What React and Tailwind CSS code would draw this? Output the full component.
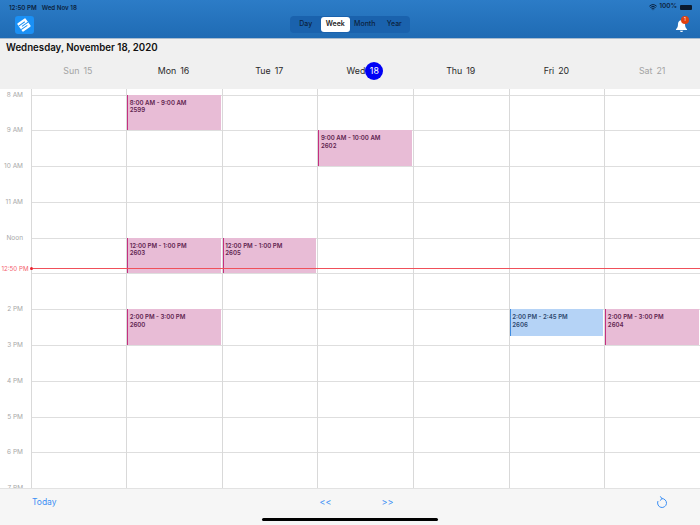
import { Wifi } from 'lucide-react';

const days = [
  { name: 'Sun', num: 15, muted: true },
  { name: 'Mon', num: 16 },
  { name: 'Tue', num: 17 },
  { name: 'Wed', num: 18, today: true },
  { name: 'Thu', num: 19 },
  { name: 'Fri', num: 20 },
  { name: 'Sat', num: 21, muted: true },
];

const hours = ['8 AM', '9 AM', '10 AM', '11 AM', 'Noon', '', '2 PM', '3 PM', '4 PM', '5 PM', '6 PM', '7 PM'];

const HOUR_HEIGHT = 35.8;
const GRID_TOP = 5.5;

const events = [
  { day: 1, start: 0, length: 1, time: '8:00 AM - 9:00 AM', id: '2599' },
  { day: 3, start: 1, length: 1, time: '9:00 AM - 10:00 AM', id: '2602' },
  { day: 1, start: 4, length: 1, time: '12:00 PM - 1:00 PM', id: '2603' },
  { day: 2, start: 4, length: 1, time: '12:00 PM - 1:00 PM', id: '2605' },
  { day: 1, start: 6, length: 1, time: '2:00 PM - 3:00 PM', id: '2600' },
  { day: 5, start: 6, length: 0.75, time: '2:00 PM - 2:45 PM', id: '2606', blue: true },
  { day: 6, start: 6, length: 1, time: '2:00 PM - 3:00 PM', id: '2604' },
];

function Logo() {
  return (
    <div className="flex h-[18.500px] w-[18.500px] items-center justify-center rounded-[3px] bg-[#1a90f5]">
      <svg width="16" height="16" viewBox="0 0 16 16">
        <g transform="rotate(-35 8 8)">
          <rect x="3" y="3" width="10" height="10" rx="0.8" fill="white" />
          <path d="M3 5.800 H10.500 M5.500 8 H13 M3 10.200 H10.500" stroke="#1a90f5" strokeWidth="1" fill="none" />
        </g>
      </svg>
    </div>
  );
}

function Segments() {
  const items = ['Day', 'Week', 'Month', 'Year'];
  return (
    <div className="flex h-[17px] w-[120px] items-center rounded-[4px] bg-[#1a62ad] p-[1px]">
      {items.map((item) => (
        <div
          key={item}
          className={
            item === 'Week'
              ? 'flex h-[15px] flex-1 items-center justify-center rounded-[3px] bg-white text-[7px] font-semibold text-[#1c1c1e]'
              : 'flex h-[15px] flex-1 items-center justify-center text-[7px] font-medium text-[#0b2340]'
          }
        >
          {item}
        </div>
      ))}
    </div>
  );
}

function Header() {
  return (
    <header className="h-[39px] shrink-0 border-b border-b-[#a9bccf] bg-gradient-to-b from-[#2c7cc7] to-[#1f6bb4]">
      <div className="flex h-[13.500px] items-center justify-between pl-[9px] pr-[8px] pt-[1px] text-[6.2px] font-semibold text-[#0b2340]">
        <div className="flex gap-[5px]">
          <span>12:50 PM</span>
          <span>Wed Nov 18</span>
        </div>
        <div className="flex items-center gap-[2px]">
          <Wifi size={8} strokeWidth={3} className="text-[#0b2340]" />
          <span className="text-[6.5px]">100%</span>
          <div className="ml-[1px] h-[5px] w-[12px] rounded-[1px] bg-[#0b1a2e]" />
        </div>
      </div>
      <div className="grid h-[24.500px] grid-cols-[1fr_120px_1fr] items-center px-[15px]">
        <div className="-mt-[2px]">
          <Logo />
        </div>
        <div className="-mt-[3px]">
          <Segments />
        </div>
        <div className="flex justify-end">
          <div className="relative -mr-[3px] mt-[1px]">
            <svg className="block" width="13" height="14" viewBox="0 0 14 15" fill="white">
              <path d="M7 1.2c-2.6 0-3.8 2-3.8 4.4 0 2.9-.8 4-2.1 5.3-.3.4-.1.8.4.8h11c.5 0 .7-.4.4-.8-1.3-1.3-2.1-2.4-2.1-5.3C10.800 3.200 9.600 1.200 7 1.200z" />
              <path d="M5.200 12.600a1.900 1.900 0 0 0 3.600 0z" />
            </svg>
            <div className="absolute -right-[1px] -top-[3px] flex h-[8px] w-[8px] items-center justify-center rounded-full bg-[#e0400f] text-[4.5px] text-white">
              1
            </div>
          </div>
        </div>
      </div>
    </header>
  );
}

function DayHeader() {
  return (
    <div className="h-[50px] shrink-0 bg-[#f0f0f0]">
      <div className="pl-[6px] pt-[2px] text-[9.7px] font-semibold leading-[14px] text-[#111]">
        Wednesday, November 18, 2020
      </div>
      <div className="mt-[6px] grid grid-cols-[30px_repeat(7,1fr)]">
        <div />
        {days.map((d) => (
          <div
            key={d.name}
            className={
              d.muted
                ? 'flex h-[20px] items-center justify-center gap-[4px] text-[8.8px] text-[#a3a3a3]'
                : 'flex h-[20px] items-center justify-center gap-[4px] text-[8.8px] text-[#2a2a2a]'
            }
          >
            {d.today ? (
              <div className="flex items-center">
                <span>{d.name}</span>
                <span className="flex h-[18px] w-[18px] items-center justify-center rounded-full bg-[#0000f5] text-white">
                  {d.num}
                </span>
              </div>
            ) : (
              <>
                <span>{d.name}</span>
                <span>{d.num}</span>
              </>
            )}
          </div>
        ))}
      </div>
    </div>
  );
}

function EventCard({ event }) {
  const color = event.blue
    ? 'border-l-[#3f8be0] bg-[#b5d3f6] text-[#2f4a70]'
    : 'border-l-[#c4307f] bg-[#e8bcd6] text-[#5f2450]';
  return (
    <div
      className={`absolute left-0 right-[1px] overflow-hidden border-l pl-[1.500px] pt-[4px] text-[6.1px] font-semibold leading-[7.700px] ${color}`}
      style={{
        top: GRID_TOP + event.start * HOUR_HEIGHT,
        height: event.length * HOUR_HEIGHT,
      }}
    >
      <div>{event.time}</div>
      <div>{event.id}</div>
    </div>
  );
}

function WeekGrid() {
  return (
    <div className="relative grid min-h-0 flex-1 grid-cols-[30.5px_repeat(7,1fr)] overflow-hidden bg-white">
      <div className="pt-[5.500px]">
        {hours.map((h, i) => (
          <div key={i} className="h-[35.8px] pr-[7.500px] text-right">
            <span className="block -translate-y-[4px] text-[6.5px] leading-[9px] text-[#a8a8a8]">{h}</span>
          </div>
        ))}
      </div>
      {days.map((d, dayIndex) => (
        <div key={d.name} className="relative border-l border-l-[#d9d9d9] pt-[5.500px]">
          {hours.map((h, i) => (
            <div key={i} className="h-[35.8px] border-t border-t-[#dedede]" />
          ))}
          {events
            .filter((e) => e.day === dayIndex)
            .map((e) => (
              <EventCard key={e.id} event={e} />
            ))}
        </div>
      ))}
      <div className="absolute left-[1.500px] right-0 top-[175px] flex items-center">
        <span className="w-[28px] whitespace-nowrap text-[6.2px] leading-[9px] text-[#f4606e]">12:50 PM</span>
        <span className="h-[3px] w-[3px] rounded-full bg-[#e8202c]" />
        <div className="h-px flex-1 bg-[#f0505a]" />
      </div>
    </div>
  );
}

function Footer() {
  return (
    <footer className="relative grid h-[37px] shrink-0 grid-cols-[287.500px_74px_1fr] border-t border-t-[#e2e2e2] bg-[#f6f6f6] pb-[10px] pl-[32px] pr-[32px] text-[#3b8ff5]">
      <div className="flex items-center text-[8.5px]">Today</div>
      <div className="flex items-center justify-between text-[9px]">
        <span>&lt;&lt;</span>
        <span>&gt;&gt;</span>
      </div>
      <div className="flex items-center justify-end">
        <svg width="12" height="13" viewBox="0 0 12 13" fill="none" stroke="currentColor" strokeWidth="1" strokeLinecap="round" strokeLinejoin="round">
          <path d="M6 2.500a4.500 4.500 0 1 1-4.200 2.900" />
          <path d="M4.200 0.600 L6.200 2.500 L4.200 4.400" />
        </svg>
      </div>
      <div className="absolute bottom-[4px] left-[262px] h-[3px] w-[176px] rounded-full bg-black" />
    </footer>
  );
}

export default function App() {
  return (
    <div className="flex h-[525px] w-[700px] flex-col overflow-hidden bg-white font-['Inter','Liberation_Sans',sans-serif]">
      <Header />
      <DayHeader />
      <WeekGrid />
      <Footer />
    </div>
  );
}
